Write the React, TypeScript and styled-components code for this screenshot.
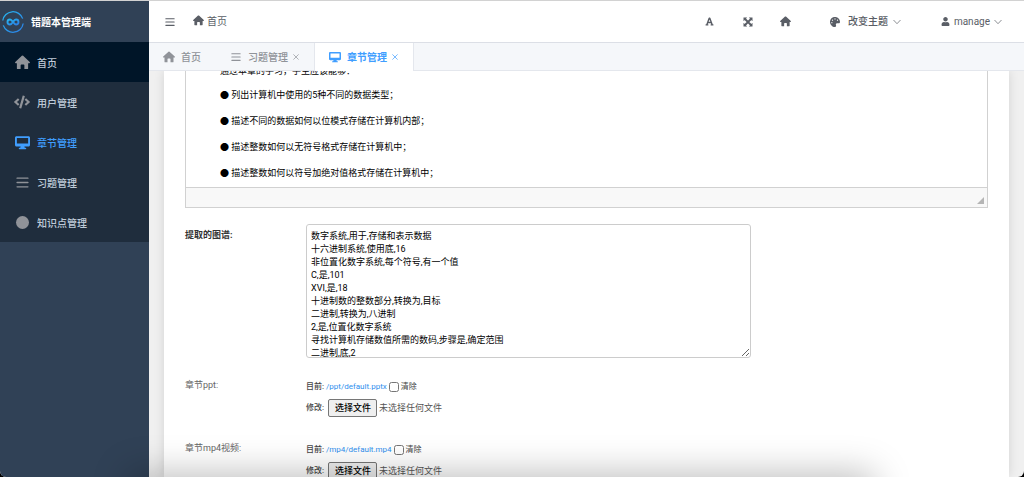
import React from "react";
import styled, { createGlobalStyle, css } from "styled-components";
import { FaCode, FaFont, FaPalette, FaUser } from "react-icons/fa";

const GlobalStyle = createGlobalStyle`
  * { box-sizing: border-box; }
  body {
    margin: 0;
    background: #000;
    font-family: Roboto, "Noto Sans CJK SC", sans-serif;
    font-size: 10px;
    color: #333;
  }
  button, input, textarea { font-family: inherit; }
  a { text-decoration: none; }
  p { margin: 0; }
`;

const Shell = styled.div`
  position: relative;
  display: flex;
  height: 100vh;
  overflow: hidden;
  border-top: 1px solid #d2d2d2;
  border-radius: 0 0 6px 6px;
  background: #f0f0f0;
`;

const DockShadow = styled.div`
  position: absolute;
  left: 13%;
  right: 15%;
  top: 100%;
  height: 40px;
  box-shadow: 0 0 36px 4px rgba(0, 0, 0, 0.26);
  pointer-events: none;
`;

const Sidebar = styled.aside`
  flex: 0 0 149px;
  background: #304156;
`;

const Brand = styled.div`
  display: flex;
  align-items: center;
  gap: 7px;
  height: 41px;
  padding-left: 2px;
  color: #fff;
  font-weight: 700;
`;

const Menu = styled.nav`
  display: flex;
  flex-direction: column;
  background: #1f2d3d;
`;

const MenuItem = styled.a<{ $dark?: boolean; $active?: boolean }>`
  display: flex;
  align-items: center;
  gap: 7px;
  height: 40px;
  padding-left: 14px;
  color: ${(p) => (p.$active ? "#409eff" : "#bfcbd9")};
  background: ${(p) => (p.$dark ? "#001528" : "transparent")};
  font-weight: 500;
  svg { color: ${(p) => (p.$active ? "#409eff" : "#909399")}; }
`;

const IconSlot = styled.span<{ $width: number }>`
  display: inline-flex;
  flex: none;
  align-items: center;
  justify-content: center;
  width: ${(p) => p.$width}px;
`;

const Dot = styled.span`
  width: 13px;
  height: 13px;
  border-radius: 50%;
  background: #909399;
`;

const Main = styled.div`
  display: flex;
  flex: 1;
  flex-direction: column;
  min-width: 0;
`;

const TopBar = styled.header`
  display: flex;
  flex: none;
  align-items: center;
  height: 42px;
  padding: 0 22px 0 15px;
  border-bottom: 1px solid #dcdfe6;
  background: #fff;
  color: #5a5e66;
`;

const BarButton = styled.button<{ $gap?: number }>`
  display: inline-flex;
  align-items: center;
  justify-content: center;
  gap: ${(p) => p.$gap ?? 4}px;
  min-width: 12px;
  padding: 0;
  border: 0;
  background: none;
  color: inherit;
  font-size: 10px;
  line-height: 14px;
  font-weight: 500;
`;

const UserName = styled.span`
  font-weight: 400;
`;

const Crumb = styled.a`
  display: inline-flex;
  align-items: center;
  gap: 3px;
  margin: 0 auto 3px 17px;
  color: #5a5e66;
`;

const Tools = styled.div`
  display: flex;
  gap: 26px;
  margin-right: 36px;
`;

const Menus = styled.div`
  display: flex;
  gap: 40px;
`;

const Tabs = styled.nav`
  display: flex;
  flex: none;
  height: 28px;
  border-bottom: 1px solid #e4e7ed;
  background: #f5f7fa;
`;

const Tab = styled.div<{ $active?: boolean }>`
  display: flex;
  align-items: center;
  gap: 5px;
  height: 28px;
  padding: 0 15px 1px 14px;
  color: #909399;
  font-weight: 500;
  ${(p) =>
    p.$active &&
    css`
      border: solid #e4e7ed;
      border-width: 0 1px;
      background: #fff;
      color: #409eff;
      font-weight: 700;
    `}
`;

const TabLink = styled.a`
  display: flex;
  align-items: center;
  gap: 6px;
  color: inherit;
`;

const CloseButton = styled.button`
  display: flex;
  justify-content: center;
  width: 6px;
  padding: 0;
  border: 0;
  background: none;
  color: inherit;
`;

const Card = styled.main`
  flex: 1;
  min-height: 0;
  margin: 0 15px;
  padding: 0 21px;
  overflow: hidden;
  background: #fff;
  box-shadow: 0 0 10px rgba(0, 0, 0, 0.12);
  clip-path: inset(0 -15px);
  font-size: 9px;
`;

const Editor = styled.section`
  margin-bottom: 16px;
  border: solid #d1d1d1;
  border-width: 0 1px 1px;
`;

const EditorBody = styled.div`
  display: flex;
  flex-direction: column;
  justify-content: flex-end;
  height: 116px;
  padding: 0 34px 1px;
  overflow: hidden;
  color: #000;
  line-height: 14px;
  p { flex: none; padding: 6px 0 4px; }
  p + p { padding-bottom: 6px; }
`;

const EditorFooter = styled.div`
  display: flex;
  align-items: flex-end;
  justify-content: flex-end;
  height: 20px;
  padding: 3px;
  border-top: 1px solid #d1d1d1;
  background: #f8f8f8;
`;

const Row = styled.div`
  display: flex;
  align-items: flex-start;
  margin-bottom: 22px;
`;

const RowLabel = styled.label<{ $bold?: boolean }>`
  flex: 0 0 121px;
  padding-top: ${(p) => (p.$bold ? 6 : 0)}px;
  color: ${(p) => (p.$bold ? "#333" : "#666")};
  font-weight: ${(p) => (p.$bold ? 700 : 400)};
  line-height: 11px;
`;

const TextArea = styled.textarea`
  flex: 0 1 445px;
  height: 134px;
  padding: 5px 4px 4px;
  overflow: hidden;
  border: 1px solid #ccc;
  border-radius: 3px;
  color: #000;
  font-size: 9px;
  line-height: 13px;
`;

const FileField = styled.div`
  display: flex;
  flex-direction: column;
  gap: 7px;
  height: 41px;
  font-size: 8px;
  color: #444;
`;

const FileLine = styled.div`
  display: flex;
  align-items: center;
  height: 14px;
  gap: 2px;
  white-space: nowrap;
  line-height: 12px;
`;

const Caption = styled.span`
  width: 18px;
  font-weight: 500;
`;

const FileLink = styled.a`
  color: #2f8fee;
`;

const Check = styled.input`
  width: 10px;
  height: 10px;
  margin: 0;
`;

const HiddenFile = styled.input`
  position: absolute;
  width: 1px;
  height: 1px;
  opacity: 0;
`;

const FilePicker = styled.label`
  display: inline-flex;
  align-items: center;
  height: 18px;
  margin-left: 2px;
  padding: 0 5px 0 6px;
  border: 1px solid #767676;
  border-radius: 2px;
  background: #efefef;
  color: #000;
  font-size: 9px;
  font-weight: 500;
`;

const FileStatus = styled.span`
  color: #555;
  font-size: 9px;
`;

const HomeIcon = ({ size }: { size: number }) => (
  <svg width={size} height={size} viewBox="0 0 16 16" fill="currentColor" aria-hidden="true">
    <path d="M7.3.9a1 1 0 0 1 1.4 0l7 6.5c.5.5.2 1.3-.5 1.3H14v5.6c0 .4-.3.7-.7.7H10v-4.2c0-.5-.3-.8-.8-.8H6.8c-.5 0-.8.3-.8.8V15H2.7c-.4 0-.7-.3-.7-.7V8.7H.8C.1 8.7-.2 7.9.3 7.4z" />
  </svg>
);

const DesktopIcon = ({ size }: { size: number }) => (
  <svg width={size} height={size} viewBox="0 0 16 16" fill="currentColor" aria-hidden="true">
    <path
      fillRule="evenodd"
      d="M1.6 1.300h12.800c.9 0 1.600.700 1.600 1.600v7.800c0 .9-.7 1.600-1.600 1.600H10l.4 1.400h.8c.5 0 .8.300.8.700s-.3.700-.8.700H4.800c-.5 0-.8-.3-.8-.7s.3-.7.8-.7h.8l.4-1.400H1.600C.7 12.300 0 11.600 0 10.700V2.900c0-.9.700-1.600 1.600-1.600zM2 3.200v5.900h12V3.200z"
    />
  </svg>
);

const FullScreenIcon = ({ size }: { size: number }) => (
  <svg width={size} height={size} viewBox="0 0 10 10" fill="currentColor" aria-hidden="true">
    <path d="M.5.500h3.700L.500 4.200zM9.500.500v3.700L5.800.500zM.5 9.500V5.800l3.700 3.700zM9.500 9.500H5.800l3.700-3.700z" />
    <path d="M1.500 1.500l7 7M8.500 1.500l-7 7" stroke="currentColor" strokeWidth="1.900" />
  </svg>
);

const BarsIcon = ({ size }: { size: number }) => (
  <svg width={size} height={size} viewBox="0 0 12 12" stroke="currentColor" strokeWidth="1.300" strokeLinecap="round" aria-hidden="true">
    <path d="M1 2h10M1 6h10M1 10h10" />
  </svg>
);

const CloseIcon = () => (
  <svg width="6" height="6" viewBox="0 0 6 6" stroke="currentColor" strokeWidth="0.700" aria-hidden="true">
    <path d="M.4.400l5.200 5.200M5.600.400L.400 5.600" />
  </svg>
);

const ChevronIcon = () => (
  <svg width="8" height="6" viewBox="0 0 8 6" fill="none" stroke="currentColor" strokeWidth="0.700" aria-hidden="true">
    <path d="M.5 1L4 4.700 7.500 1" />
  </svg>
);

const GripIcon = () => (
  <svg width="7" height="7" viewBox="0 0 7 7" fill="#b5b5b5" aria-hidden="true">
    <path d="M7 0v7H0z" />
  </svg>
);

const Logo = () => (
  <svg width="22" height="22" viewBox="0 0 22 22" fill="none" aria-hidden="true">
    <defs>
      <linearGradient id="brand" x1="0" y1="0" x2="1" y2="1">
        <stop offset="0" stopColor="#27b4ee" />
        <stop offset="1" stopColor="#2b7fe6" />
      </linearGradient>
    </defs>
    <path d="M.8 9.500A10.300 10.300 0 0 1 20.700 7.600M21.200 12.500A10.300 10.300 0 0 1 1.300 14.400" stroke="url(#brand)" strokeWidth="1.300" />
    <path
      d="M11 11C9.700 9.200 9.100 8.500 8 8.500a2.500 2.500 0 0 0 0 5c1.300 0 2.200-1.300 3-2.500s1.700-2.500 3-2.500a2.500 2.500 0 0 1 0 5c-1.100 0-1.700-.7-3-2.500z"
      stroke="url(#brand)"
      strokeWidth="1.900"
    />
  </svg>
);

const menu = [
  { label: "首页", icon: <HomeIcon size={15} />, dark: true },
  { label: "用户管理", icon: <FaCode size={16} /> },
  { label: "章节管理", icon: <DesktopIcon size={15} />, active: true },
  { label: "习题管理", icon: <BarsIcon size={13} /> },
  { label: "知识点管理", icon: <Dot /> },
];

const tabs = [
  { label: "首页", icon: <HomeIcon size={12} />, closable: false },
  { label: "习题管理", icon: <BarsIcon size={10} />, closable: true },
  { label: "章节管理", icon: <DesktopIcon size={12} />, closable: true, active: true },
];

const goals = [
  "通过本章的学习，学生应该能够：",
  "● 列出计算机中使用的5种不同的数据类型；",
  "● 描述不同的数据如何以位模式存储在计算机内部；",
  "● 描述整数如何以无符号格式存储在计算机中；",
  "● 描述整数如何以符号加绝对值格式存储在计算机中；",
];

const triples = [
  "数字系统,用于,存储和表示数据",
  "十六进制系统,使用底,16",
  "非位置化数字系统,每个符号,有一个值",
  "C,是,101",
  "XVI,是,18",
  "十进制数的整数部分,转换为,目标",
  "二进制,转换为,八进制",
  "2,是,位置化数字系统",
  "寻找计算机存储数值所需的数码,步骤是,确定范围",
  "二进制,底,2",
].join("\n");

const files = [
  { id: "ppt", label: "章节ppt:", path: "/ppt/default.pptx" },
  { id: "mp4", label: "章节mp4视频:", path: "/mp4/default.mp4" },
];

export default function App() {
  return (
    <>
      <GlobalStyle />
      <Shell>
        <Sidebar>
          <Brand>
            <Logo />
            错题本管理端
          </Brand>
          <Menu>
            {menu.map((m) => (
              <MenuItem key={m.label} href="#" $dark={m.dark} $active={m.active}>
                <IconSlot $width={16}>{m.icon}</IconSlot>
                {m.label}
              </MenuItem>
            ))}
          </Menu>
        </Sidebar>
        <Main>
          <TopBar>
            <BarButton aria-label="折叠菜单">
              <BarsIcon size={10} />
            </BarButton>
            <Crumb href="#">
              <HomeIcon size={11} />
              首页
            </Crumb>
            <Tools>
              <BarButton aria-label="字体"><FaFont size={9} /></BarButton>
              <BarButton aria-label="全屏"><FullScreenIcon size={10} /></BarButton>
              <BarButton aria-label="主页"><HomeIcon size={11} /></BarButton>
            </Tools>
            <Menus>
              <BarButton $gap={5}>
                <IconSlot $width={15}><FaPalette size={10} /></IconSlot>
                改变主题
                <ChevronIcon />
              </BarButton>
              <BarButton>
                <FaUser size={9} />
                <UserName>manage</UserName>
                <ChevronIcon />
              </BarButton>
            </Menus>
          </TopBar>
          <Tabs>
            {tabs.map((t) => (
              <Tab key={t.label} $active={t.active}>
                <TabLink href="#">
                  <IconSlot $width={12}>{t.icon}</IconSlot>
                  {t.label}
                </TabLink>
                {t.closable && (
                  <CloseButton aria-label={`关闭${t.label}`}>
                    <CloseIcon />
                  </CloseButton>
                )}
              </Tab>
            ))}
          </Tabs>
          <Card>
            <Editor>
              <EditorBody>
                {goals.map((g) => (
                  <p key={g}>{g}</p>
                ))}
              </EditorBody>
              <EditorFooter>
                <GripIcon />
              </EditorFooter>
            </Editor>
            <Row>
              <RowLabel htmlFor="graph" $bold>提取的图谱:</RowLabel>
              <TextArea id="graph" defaultValue={triples} spellCheck={false} />
            </Row>
            {files.map((f) => (
              <Row key={f.id}>
                <RowLabel htmlFor={f.id}>{f.label}</RowLabel>
                <FileField>
                  <FileLine>
                    <Caption>目前:</Caption>
                    <FileLink href="#">{f.path}</FileLink>
                    <Check type="checkbox" id={`${f.id}-clear`} />
                    <label htmlFor={`${f.id}-clear`}>清除</label>
                  </FileLine>
                  <FileLine>
                    <Caption>修改:</Caption>
                    <HiddenFile type="file" id={f.id} />
                    <FilePicker htmlFor={f.id}>选择文件</FilePicker>
                    <FileStatus>未选择任何文件</FileStatus>
                  </FileLine>
                </FileField>
              </Row>
            ))}
          </Card>
        </Main>
        <DockShadow />
      </Shell>
    </>
  );
}
